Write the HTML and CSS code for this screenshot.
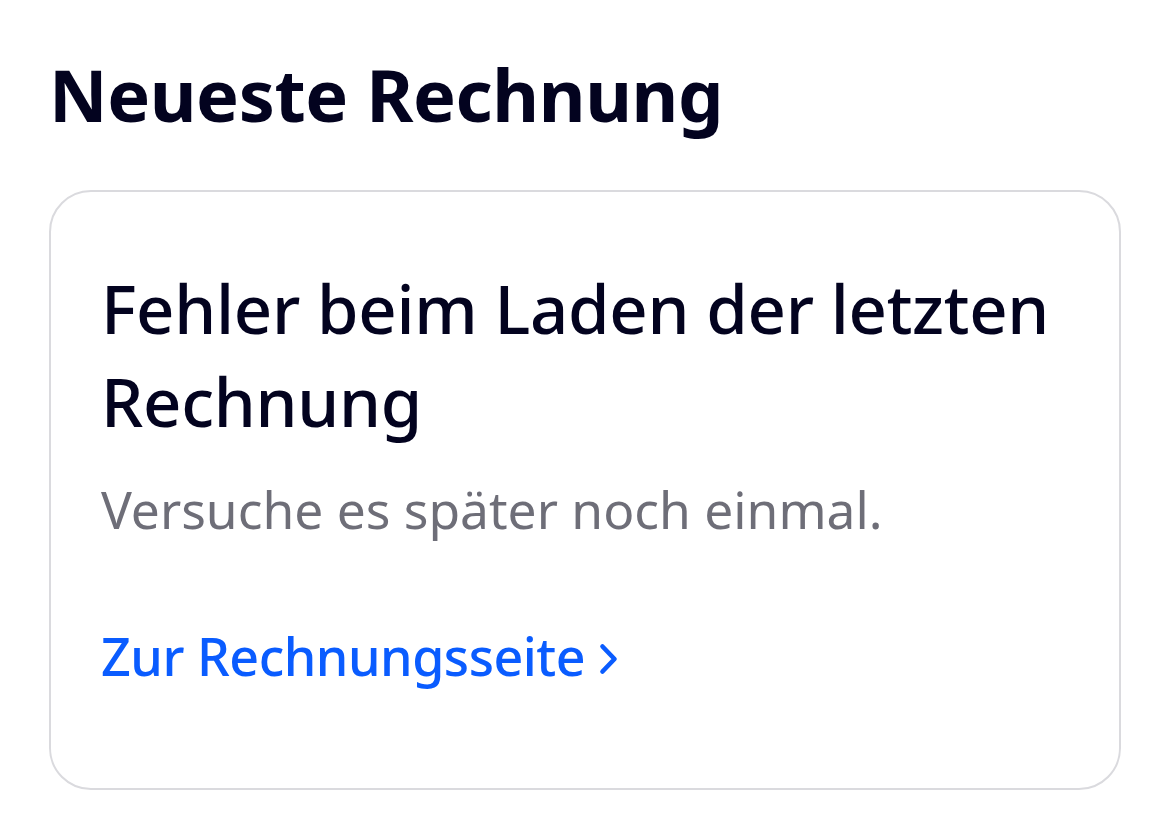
FILE: index.html
```html
<!DOCTYPE html>
<html lang="de">
<head>
<meta charset="utf-8">
<link rel="stylesheet" href="styles.css">
</head>
<body>
<main class="page">
  <h1 class="title">Neueste Rechnung</h1>
  <section class="card">
    <h2 class="card-title">Fehler beim Laden der letzten Rechnung</h2>
    <p class="card-text">Versuche es später noch einmal.</p>
    <a class="card-link" href="#"><span>Zur Rechnungsseite</span><svg class="chev" width="19" height="32" viewBox="0 0 19 32"><path d="M3.5 3.5 L15.5 16 L3.5 28.5" fill="none" stroke="currentColor" stroke-width="4.6" stroke-linecap="round" stroke-linejoin="round"/></svg></a>
  </section>
</main>
</body>
</html>
```
FILE: styles.css
```css
html, body {
  margin: 0;
  padding: 0;
  background: #ffffff;
}
body {
  font-family: "Noto Sans", "Open Sans", sans-serif;
  color: #03031f;
}
.page {
  padding: 46px 49px 0 49px;
  width: 1072px;
}
.title {
  margin: 0;
  font-size: 72px;
  font-weight: 700;
  line-height: 96px;
  letter-spacing: -0.4px;
}
.card {
  margin-top: 48px;
  border: 2.5px solid #dadade;
  border-radius: 42px;
  padding: 70px 50px 96px 50px;
}
.card-title {
  margin: 0;
  font-size: 67px;
  font-weight: 500;
  line-height: 93px;
  letter-spacing: -0.3px;
}
.card-text {
  margin: 25px 0 0 0;
  font-size: 51.5px;
  line-height: 72px;
  color: #6e6e78;
}
.card-link {
  display: flex;
  width: fit-content;
  align-items: flex-start;
  margin-top: 75px;
  font-size: 52px;
  font-weight: 500;
  line-height: 72px;
  letter-spacing: -0.5px;
  color: #0a5cff;
  text-decoration: none;
}
.chev {
  flex: none;
  margin-top: 23px;
  margin-left: 14px;
}
```
